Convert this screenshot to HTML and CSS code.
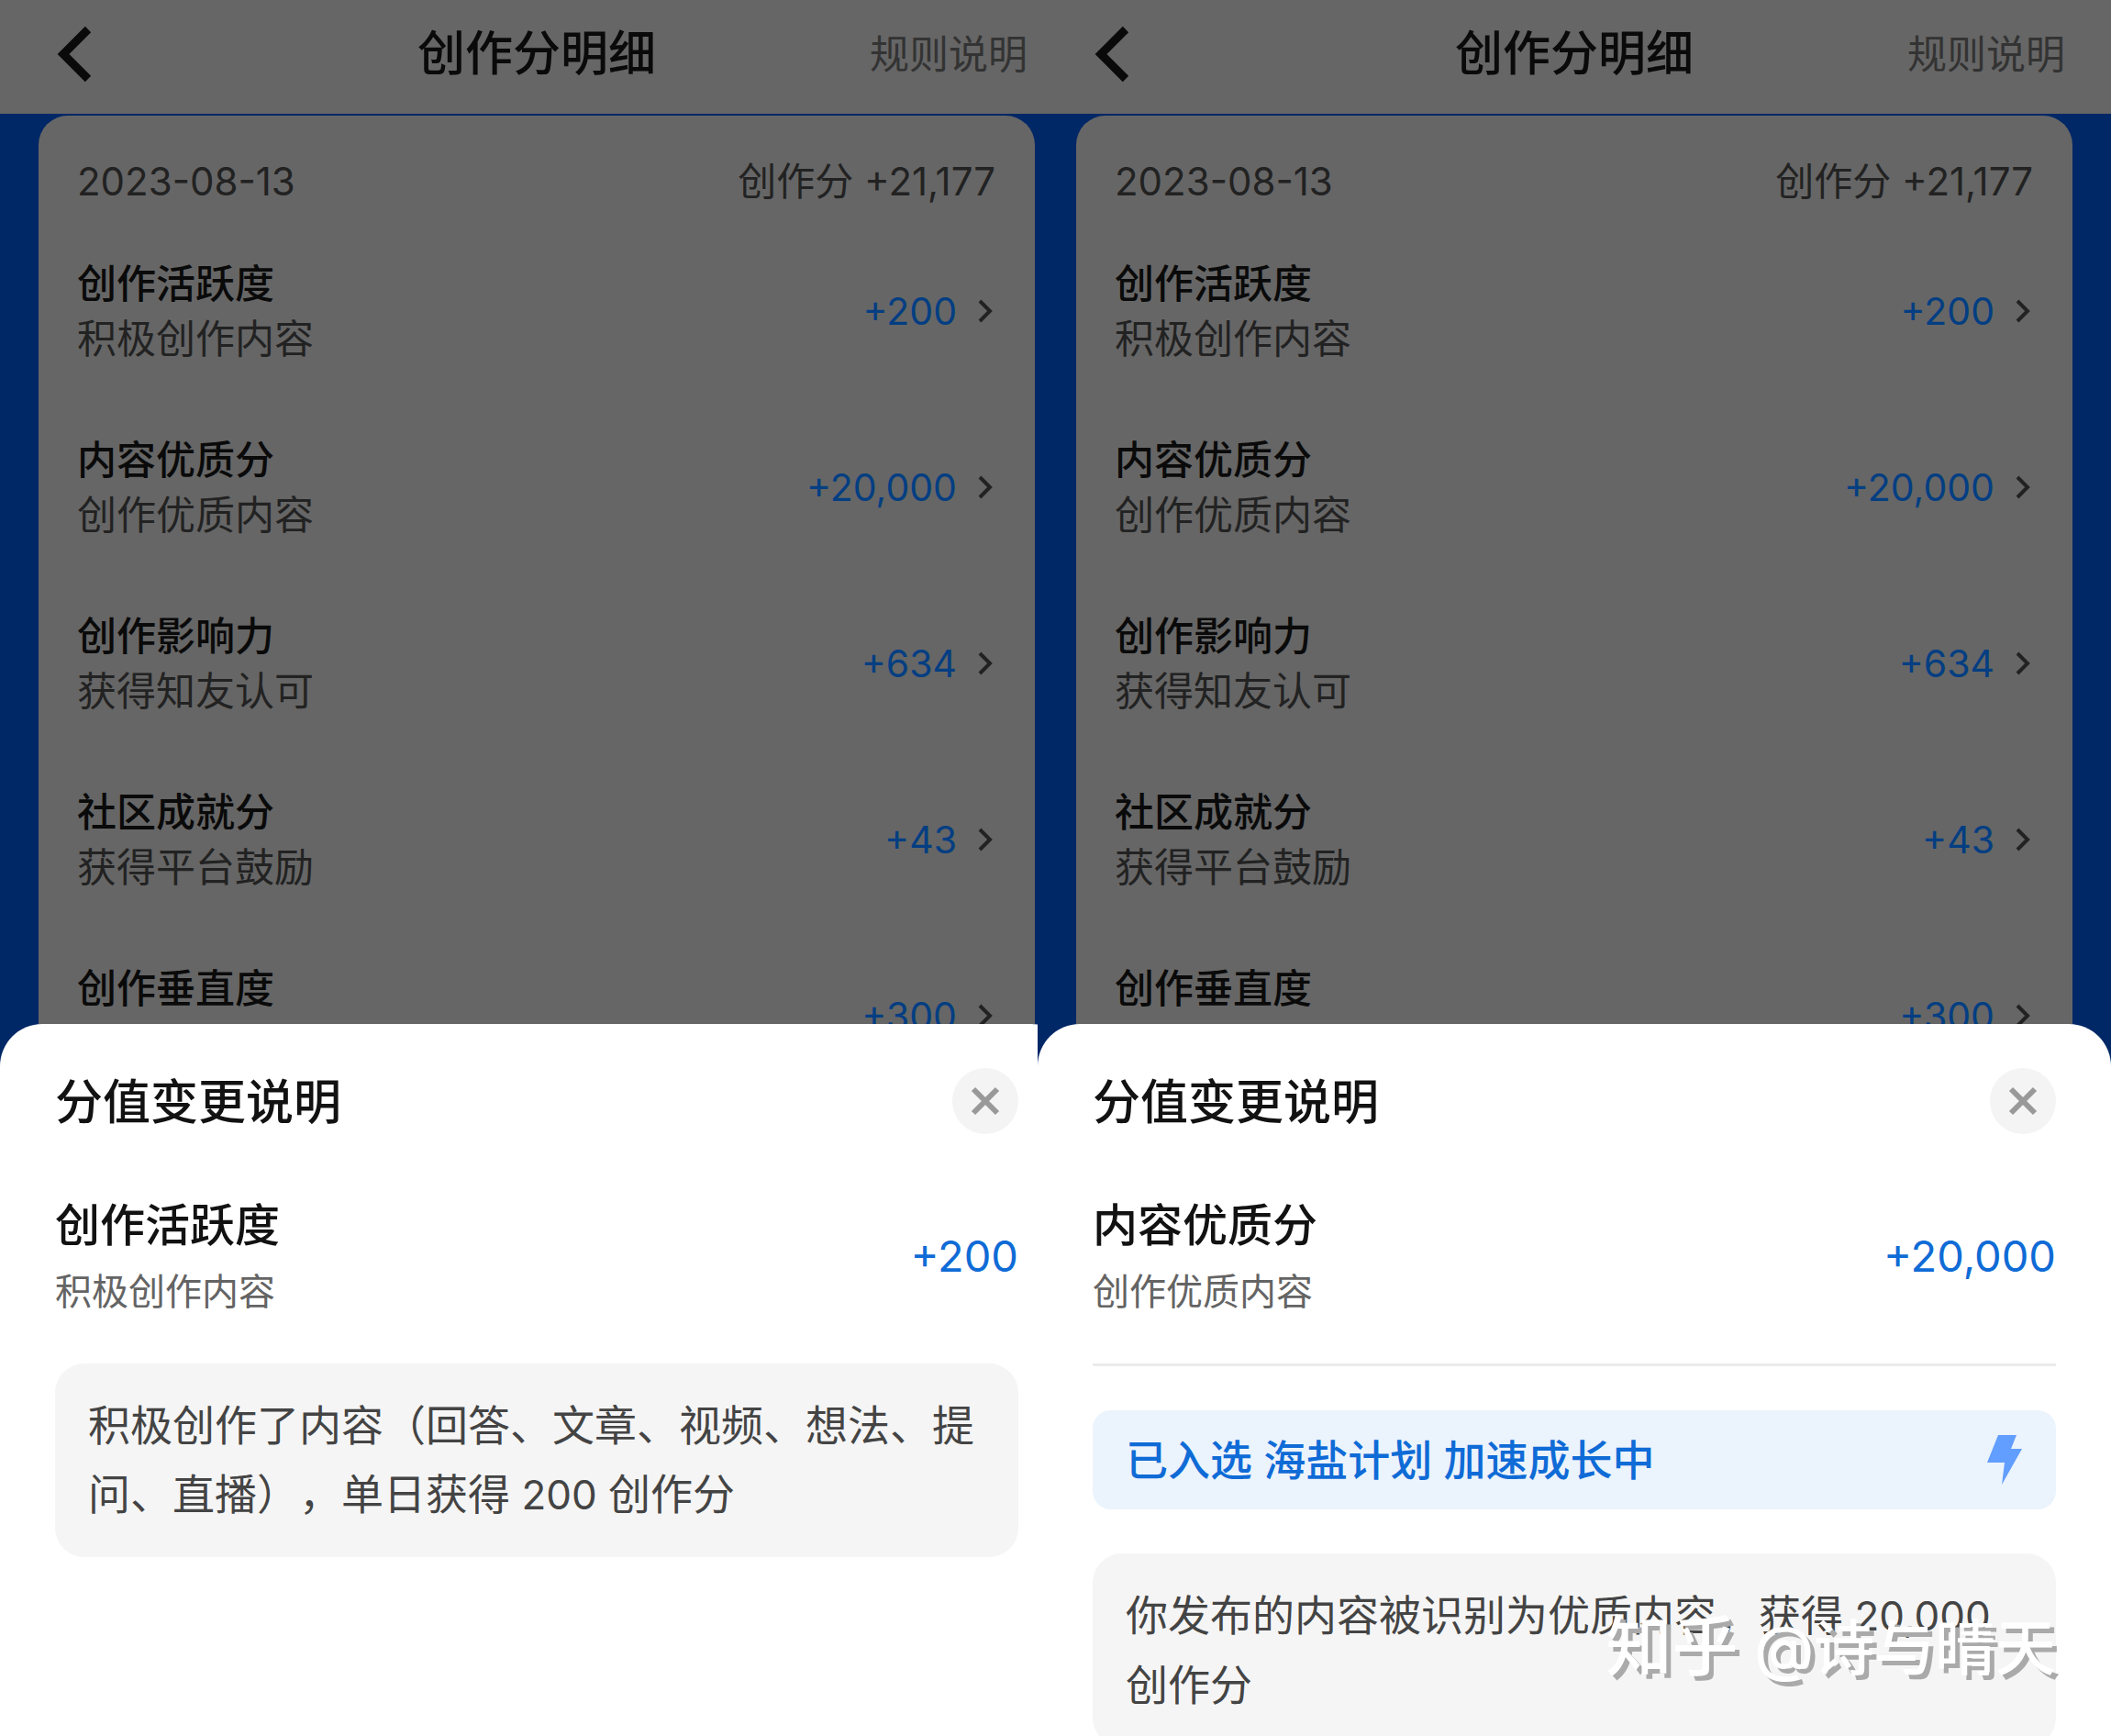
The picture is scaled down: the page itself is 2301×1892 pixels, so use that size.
FILE: index.html
```html
<!DOCTYPE html>
<html lang="zh-CN">
<head>
  <meta charset="utf-8">
  <title>创作分明细</title>
  <link rel="stylesheet" href="styles.css">
</head>
<body>
  <div class="screens">

    <!-- 创作活跃度 -->
    <section class="screen">
      <div class="phone">
        <header class="topbar">
          <button class="back" aria-label="返回">
            <svg width="52" height="64" viewBox="0 0 52 64"><path d="M46 5L19 32l27 27" fill="none" stroke="#0a0a0a" stroke-width="9"/></svg>
          </button>
          <h1>创作分明细</h1>
          <a class="rules" href="#">规则说明</a>
        </header>

        <main class="detail">
          <div class="card">
            <div class="day"><span>2023-08-13</span><span>创作分 +21,177</span></div>
            <ul class="scores">
              <li><a href="#">
                <div><b>创作活跃度</b><p>积极创作内容</p></div>
                <span class="num">+200</span>
                <svg class="arrow" viewBox="0 0 20 28"><path d="M3 3l11 11L3 25"/></svg>
              </a></li>
              <li><a href="#">
                <div><b>内容优质分</b><p>创作优质内容</p></div>
                <span class="num">+20,000</span>
                <svg class="arrow" viewBox="0 0 20 28"><path d="M3 3l11 11L3 25"/></svg>
              </a></li>
              <li><a href="#">
                <div><b>创作影响力</b><p>获得知友认可</p></div>
                <span class="num">+634</span>
                <svg class="arrow" viewBox="0 0 20 28"><path d="M3 3l11 11L3 25"/></svg>
              </a></li>
              <li><a href="#">
                <div><b>社区成就分</b><p>获得平台鼓励</p></div>
                <span class="num">+43</span>
                <svg class="arrow" viewBox="0 0 20 28"><path d="M3 3l11 11L3 25"/></svg>
              </a></li>
              <li><a href="#">
                <div><b>创作垂直度</b></div>
                <span class="num">+300</span>
                <svg class="arrow" viewBox="0 0 20 28"><path d="M3 3l11 11L3 25"/></svg>
              </a></li>
            </ul>
          </div>
        </main>

        <div class="sheet">
          <div class="sheet-head">
            <h2>分值变更说明</h2>
            <button class="close" aria-label="关闭">
              <svg width="32" height="32" viewBox="0 0 32 32"><path d="M3 3l26 26M29 3L3 29" stroke="#999" stroke-width="6"/></svg>
            </button>
          </div>
          <div class="item">
            <div><h3>创作活跃度</h3><p>积极创作内容</p></div>
            <span class="total">+200</span>
          </div>
          <p class="note">积极创作了内容（回答、文章、视频、想法、提问、直播），单日获得<span class="points"> 200 </span>创作分</p>
        </div>
      </div>
    </section>

    <!-- 内容优质分 -->
    <section class="screen">
      <div class="phone">
        <header class="topbar">
          <button class="back" aria-label="返回">
            <svg width="52" height="64" viewBox="0 0 52 64"><path d="M46 5L19 32l27 27" fill="none" stroke="#0a0a0a" stroke-width="9"/></svg>
          </button>
          <h1>创作分明细</h1>
          <a class="rules" href="#">规则说明</a>
        </header>

        <main class="detail">
          <div class="card">
            <div class="day"><span>2023-08-13</span><span>创作分 +21,177</span></div>
            <ul class="scores">
              <li><a href="#">
                <div><b>创作活跃度</b><p>积极创作内容</p></div>
                <span class="num">+200</span>
                <svg class="arrow" viewBox="0 0 20 28"><path d="M3 3l11 11L3 25"/></svg>
              </a></li>
              <li><a href="#">
                <div><b>内容优质分</b><p>创作优质内容</p></div>
                <span class="num">+20,000</span>
                <svg class="arrow" viewBox="0 0 20 28"><path d="M3 3l11 11L3 25"/></svg>
              </a></li>
              <li><a href="#">
                <div><b>创作影响力</b><p>获得知友认可</p></div>
                <span class="num">+634</span>
                <svg class="arrow" viewBox="0 0 20 28"><path d="M3 3l11 11L3 25"/></svg>
              </a></li>
              <li><a href="#">
                <div><b>社区成就分</b><p>获得平台鼓励</p></div>
                <span class="num">+43</span>
                <svg class="arrow" viewBox="0 0 20 28"><path d="M3 3l11 11L3 25"/></svg>
              </a></li>
              <li><a href="#">
                <div><b>创作垂直度</b></div>
                <span class="num">+300</span>
                <svg class="arrow" viewBox="0 0 20 28"><path d="M3 3l11 11L3 25"/></svg>
              </a></li>
            </ul>
          </div>
        </main>

        <div class="sheet">
          <div class="sheet-head">
            <h2>分值变更说明</h2>
            <button class="close" aria-label="关闭">
              <svg width="32" height="32" viewBox="0 0 32 32"><path d="M3 3l26 26M29 3L3 29" stroke="#999" stroke-width="6"/></svg>
            </button>
          </div>
          <div class="item">
            <div><h3>内容优质分</h3><p>创作优质内容</p></div>
            <span class="total">+20,000</span>
          </div>
          <hr>
          <div class="banner">
            <span>已入选 海盐计划 加速成长中</span>
            <svg width="38" height="54" viewBox="0 0 38 54"><path d="M12 0h20l-6 15h12L16 54l3-24H0z" fill="#629eff"/></svg>
          </div>
          <p class="note">你发布的内容被识别为优质内容，获得<span class="points"> 20,000 </span>创作分</p>
        </div>
        <div class="watermark"><span class="brand">知乎</span> @诗与晴天</div>
      </div>
    </section>

  </div>
</body>
</html>
```

FILE: styles.css
```css
*{box-sizing:border-box}
body,h1,h2,h3,p,ul{margin:0;padding:0}
body{font-family:Inter,"Noto Sans CJK SC",sans-serif;font-size:43px;line-height:60px;
  background:#fff;text-spacing-trim:space-all}
h1,h2,h3,b{font-weight:500}
a{color:inherit;text-decoration:none}
button{border:0;padding:0;background:none;cursor:pointer}
svg{display:block;flex:none}

.screens{display:grid;grid-template-columns:1131fr 1170fr;height:100vh;overflow:hidden}
.screen{min-width:0;overflow:hidden}
.phone{position:relative;display:flex;flex-direction:column;height:100%;background:#002766}
.screen:first-child .phone{width:calc(100% + 39px)}

.topbar{display:grid;grid-template-columns:1fr auto 1fr;align-items:center;flex:none;
  height:124px;padding:0 50px 6px;background:#666;color:#0a0a0a}
.topbar h1{font-size:52px}
.back{justify-self:start}
.rules{justify-self:end;color:#333}

.detail{flex:none;height:992px;padding:2px 42px 0;overflow:hidden}
.card{height:1100px;padding:42px 43px 0 42px;border-radius:32px;background:#666;color:#222}
.day{display:flex;justify-content:space-between;margin-bottom:51px;font-size:42px}
.scores{display:grid;gap:72px;list-style:none}
.scores a{display:flex;align-items:center;height:120px}
.scores div{flex:1;align-self:flex-start}
.scores b{display:block;color:#0a0a0a}
.num{margin-right:22px;font-size:41px;color:#033e82}
.arrow{width:20px;height:28px;fill:none;stroke:#222;stroke-width:4}

.sheet{flex:1;padding:48px 60px 0;border-radius:46px 46px 0 0;background:#fff;color:#121212}
.sheet-head{display:flex;justify-content:space-between;align-items:center;height:72px}
.sheet h2{padding-top:4px;font-size:52px}
.close{display:grid;place-items:center;width:72px;height:72px;border-radius:50%;background:#f4f4f4}
.item{display:flex;justify-content:space-between;align-items:center;margin:64px 0 42px;line-height:72px}
.item h3{font-size:49px}
.item p{font-size:40px;color:#646464}
.total{padding-bottom:6px;font-size:47px;color:#0f6bd6}
.note{padding:30px 36px;border-radius:32px;background:#f5f5f5;font-size:46px;line-height:75px;color:#444}
.points{font-size:44px}
hr{height:3px;margin:0 0 48px;border:0;background:#ebebeb}
.banner{display:flex;justify-content:space-between;align-items:center;height:108px;margin-bottom:48px;
  padding:0 37px 0 36px;border-radius:20px;background:#ebf3fc;font-size:46px;font-weight:500;color:#0f6bd6}

.watermark{position:absolute;right:60px;bottom:56px;font-size:66px;font-weight:500;line-height:80px;
  color:#fff;text-shadow:5px 5px 0 #aaa;white-space:nowrap}
.brand{font-size:72px}
```
